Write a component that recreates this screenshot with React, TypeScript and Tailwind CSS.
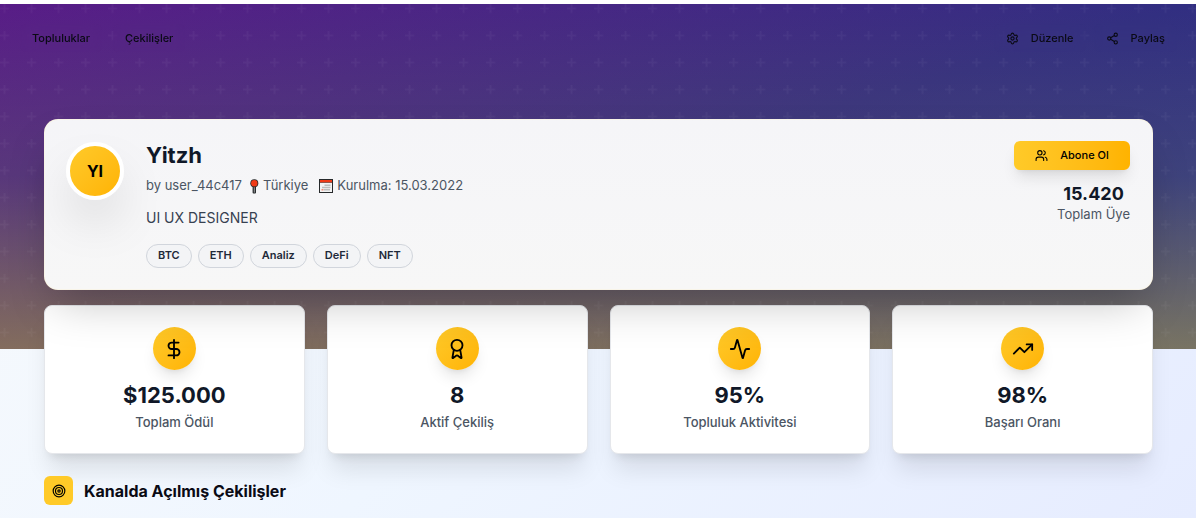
import type { ReactNode } from "react";
import { Activity, Award, DollarSign, Settings, Share2, Target, TrendingUp, Users, type LucideIcon } from "lucide-react";

const gold = "bg-linear-to-br from-[#ffca28] to-[#ffb300]";

const tags = ["BTC", "ETH", "Analiz", "DeFi", "NFT"];

const stats: { icon: LucideIcon; value: string; label: string }[] = [
  { icon: DollarSign, value: "$125.000", label: "Toplam Ödül" },
  { icon: Award, value: "8", label: "Aktif Çekiliş" },
  { icon: Activity, value: "95%", label: "Topluluk Aktivitesi" },
  { icon: TrendingUp, value: "98%", label: "Başarı Oranı" },
];

function NavButton({ children }: { children: ReactNode }) {
  return (
    <button className="flex h-7 items-center gap-3 rounded-md px-3 text-[11px] font-medium backdrop-blur-sm">
      {children}
    </button>
  );
}

function PinIcon() {
  return (
    <svg width="9" height="15" viewBox="0 0 9 15" role="img" aria-label="Konum">
      <rect x="2.6" y="6" width="3.4" height="8.6" rx="1" fill="#26292b" />
      <rect x="3.8" y="7" width="1" height="6.6" fill="#9a9c9e" />
      <circle cx="4.3" cy="4.2" r="4" fill="#26292b" />
      <circle cx="4.3" cy="4.2" r="3.2" fill="#f03a17" />
    </svg>
  );
}

function CalendarIcon() {
  return (
    <svg width="14" height="14" viewBox="0 0 14 14" role="img" aria-label="Tarih">
      <rect width="14" height="14" fill="#26292b" />
      <rect x="1" y="1" width="12" height="2.4" fill="#f03a17" />
      <rect x="1" y="3.8" width="12" height="9.2" fill="#f4f4f4" />
      <path d="M5.5 5.500h6v1.500h-6zM3 7.700h8.500v1.500H3zM5 10h6v1.500H5z" fill="#bdbdbd" />
      <path d="M2.500 10h2v1.500h-2z" fill="#f08a75" />
    </svg>
  );
}

function Hero() {
  return (
    <div aria-hidden="true" className="absolute inset-x-0 top-1 h-[345px] bg-linear-to-br from-[#581c87] via-[#312e81] to-[#1e3a8a]">
      <div className="absolute inset-0 bg-linear-to-t from-[#ffca28]/40 via-[#ffca28]/10 to-transparent" />
      <svg className="absolute inset-0 h-full w-full">
        <defs>
          <pattern id="plus" width="30" height="30" patternUnits="userSpaceOnUse" patternTransform="scale(0.9)">
            <path d="M4 0h2v4h4v2H6v4H4V6H0V4h4z" fill="#fff" fillOpacity="0.04" />
          </pattern>
        </defs>
        <rect width="100%" height="100%" fill="url(#plus)" />
      </svg>
    </div>
  );
}

export default function App() {
  return (
    <div className="relative isolate min-h-screen bg-white pt-1 font-['Inter',sans-serif] text-[#0a0a14]">
      <div className="absolute inset-x-0 top-1 bottom-0 bg-linear-135 from-[#f8fafc] via-[#eff6ff] to-[#e6ecff]" />
      <Hero />

      <div className="relative">
        <nav className="flex justify-between px-5 pt-5">
          <div className="flex gap-[11px]">
            <NavButton>Topluluklar</NavButton>
            <NavButton>Çekilişler</NavButton>
          </div>
          <div className="-mr-px flex gap-2">
            <NavButton>
              <Settings size={13} />
              Düzenle
            </NavButton>
            <NavButton>
              <Share2 size={13} />
              Paylaş
            </NavButton>
          </div>
        </nav>

        <main className="mt-[67px] mr-[43px] ml-11">
          <section className="relative z-10 flex items-start justify-between rounded-[14px] border border-[#ffca28]/20 bg-[#f6f6f8] bg-clip-padding pt-5 pr-[22px] pb-[21px] pl-[21px] shadow-[0_22px_45px_-11px_rgba(0,0,0,0.25)]">
            <div className="absolute -inset-px -z-10 rounded-[14px] bg-[#f8f4e8]" />
            <div className="absolute inset-0 -z-10 rounded-[13px] bg-linear-to-b from-[#f5f5f8] to-[#f7f7f7]" />
            <div className="flex gap-[21px]">
              <div className={`mt-0.5 flex size-[58px] shrink-0 items-center justify-center rounded-full border-4 border-white text-base font-bold text-black shadow-2xl ${gold}`}>
                YI
              </div>
              <div className="pl-px">
                <h1 className="text-[22px] leading-[30px] font-bold text-gray-900">Yitzh</h1>
                <div className="mt-1.5 flex h-5 items-center text-[13px] text-[#4b5563]">
                  <span>by user_44c417</span>
                  <span className="ml-2 flex items-center gap-1">
                    <PinIcon />
                    Türkiye
                  </span>
                  <span className="ml-[11px] flex items-center gap-1">
                    <CalendarIcon />
                    Kurulma: 15.03.2022
                  </span>
                </div>
                <p className="mt-3 text-sm leading-5 text-[#374151]">UI UX DESIGNER</p>
                <ul className="mt-4 flex gap-1.5">
                  {tags.map((tag) => (
                    <li key={tag} className="flex h-6 rounded-full border border-gray-300 bg-gray-100 px-[11px] text-[11px] leading-[21px] font-semibold text-gray-800">
                      {tag}
                    </li>
                  ))}
                </ul>
              </div>
            </div>
            <div className="mt-px flex flex-col items-end">
              <button className="flex h-[29px] w-[116px] items-center justify-center gap-3 rounded-md bg-linear-to-r from-[#ffca28] to-[#ffb300] text-[11px] font-medium text-black shadow-lg">
                <Users size={13} />
                Abone Ol
              </button>
              <div className="mt-3 text-center">
                <div className="text-lg leading-6 font-bold text-gray-900">15.420</div>
                <div className="text-[13px] leading-4 text-[#4b5563]">Toplam Üye</div>
              </div>
            </div>
          </section>

          <section className="mt-[15px] grid grid-cols-4 gap-[22px]">
            {stats.map(({ icon: Icon, value, label }) => (
              <div key={label} className="flex flex-col items-center rounded-lg border border-gray-200 bg-white pt-[21px] pb-[22px] shadow-xl">
                <div className={`flex size-[43px] items-center justify-center rounded-full text-black shadow-lg ${gold}`}>
                  <Icon size={22} />
                </div>
                <div className="mt-[11px] text-[22px] leading-7 font-bold text-gray-900">{value}</div>
                <div className="mt-1 text-[13px] leading-[18px] font-medium text-[#4b5563]">{label}</div>
              </div>
            ))}
          </section>

          <div className="mt-[22px] flex items-center gap-[11px] pb-[13px]">
            <span className="flex size-[29px] items-center justify-center rounded-md bg-[#ffca28] text-black">
              <Target size={14} />
            </span>
            <h2 className="text-base leading-6 font-bold text-[#0a0a14]">Kanalda Açılmış Çekilişler</h2>
          </div>
        </main>
      </div>
    </div>
  );
}
